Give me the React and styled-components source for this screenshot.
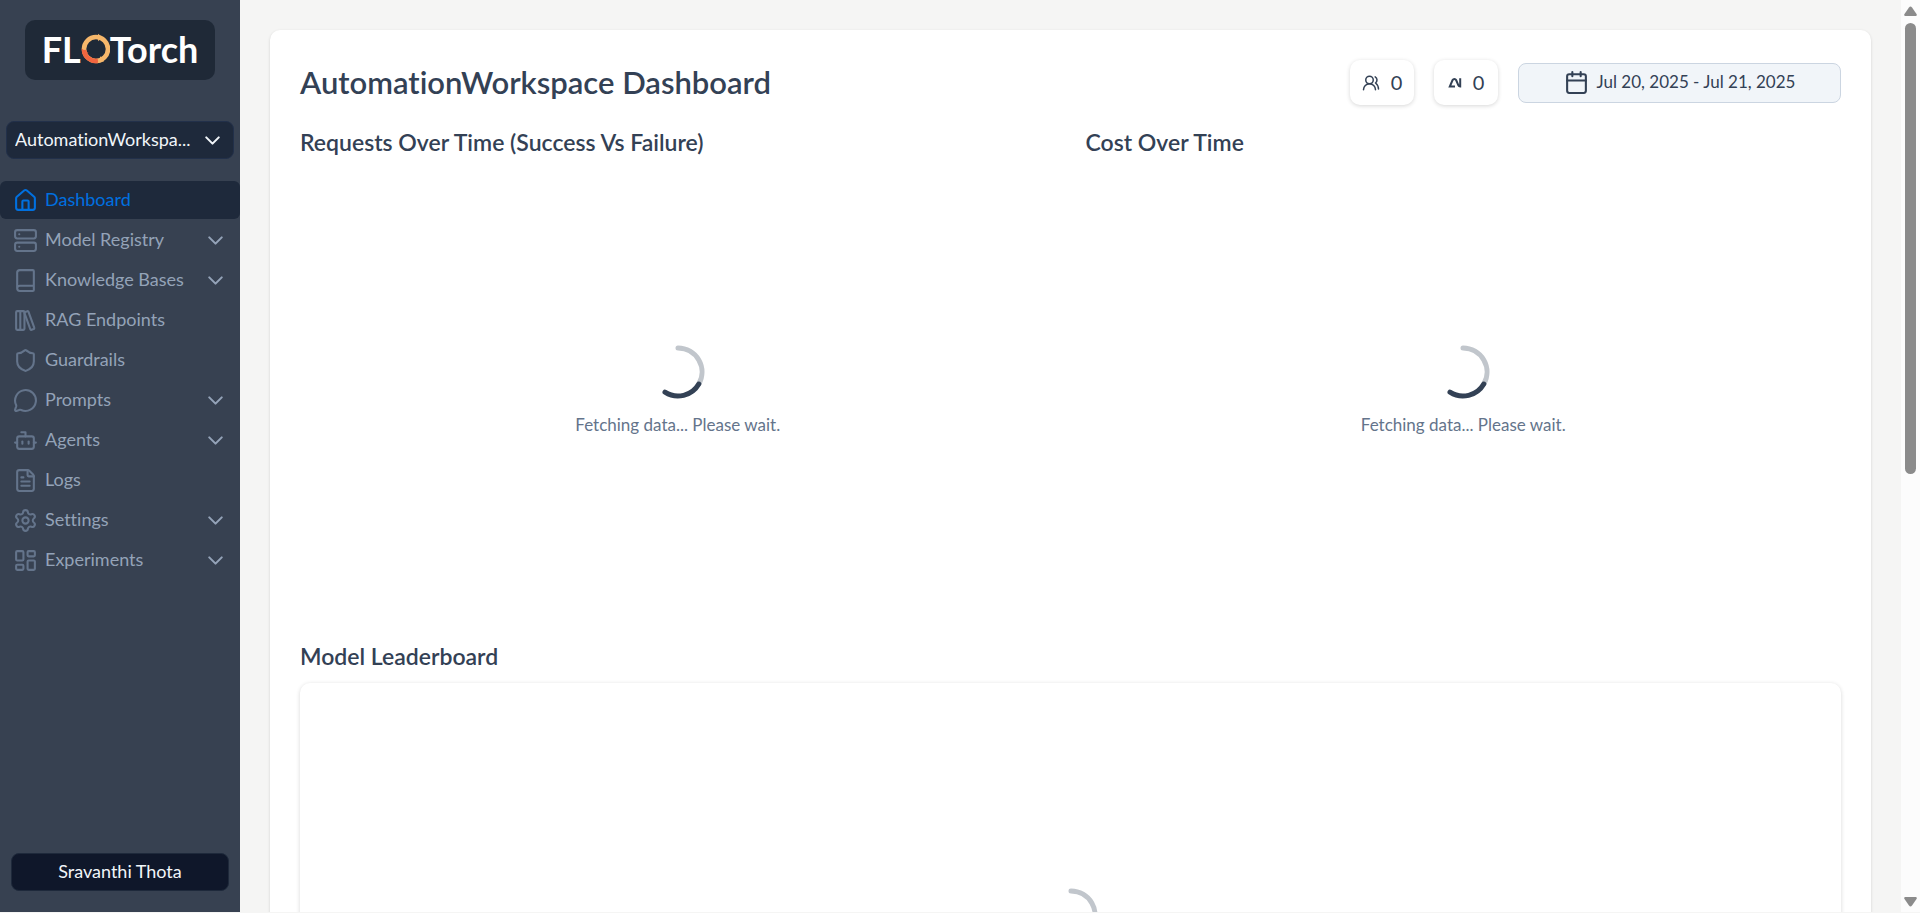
import React from "react";
import styled, { createGlobalStyle } from "styled-components";
import {
  Book,
  Bot,
  Calendar,
  ChevronDown,
  FileText,
  House,
  LayoutDashboard,
  LibraryBig,
  MessageCircle,
  Server,
  Settings,
  Shield,
  UsersRound,
} from "lucide-react";

const GlobalStyle = createGlobalStyle`
  *, *::before, *::after { box-sizing: border-box; }
  body {
    margin: 0;
    background: #f5f5f4;
    color: #334155;
    font-family: Lato, "Liberation Sans", sans-serif;
    font-size: 18px;
    font-variant-ligatures: none;
    line-height: 24px;
  }
  button { font: inherit; font-variant-ligatures: none; cursor: pointer; }
  h1, h2, p, ul { margin: 0; padding: 0; }
`;

const Shell = styled.div`
  display: flex;
  height: calc(100vh - 1px);
  overflow: hidden;
`;

const Sidebar = styled.aside`
  display: flex;
  flex-direction: column;
  flex: none;
  width: 240px;
  padding: 20px 0 21px;
  background: #374151;
`;

const Brand = styled.a`
  display: flex;
  align-items: center;
  justify-content: center;
  align-self: center;
  width: 190px;
  height: 60px;
  padding-bottom: 2px;
  border-radius: 10px;
  background: #1f2937;
  color: #ffffff;
  font-size: 36px;
  font-weight: 700;
  line-height: 40px;
  text-decoration: none;

  svg { flex: none; }
`;

const WorkspaceButton = styled.button`
  display: flex;
  align-items: center;
  justify-content: space-between;
  flex: none;
  height: 38px;
  margin: 41px 6px 22px;
  padding: 0 8px;
  border: 1px solid #22304a;
  border-radius: 8px;
  background: #1e293b;
  color: #f1f5f9;

  span {
    overflow: hidden;
    padding-bottom: 2px;
    text-overflow: ellipsis;
    white-space: nowrap;
  }
`;

const NavList = styled.ul`
  display: flex;
  flex-direction: column;
  gap: 2px;
  flex: 1;
  list-style: none;
`;

const NavLink = styled.a`
  display: flex;
  align-items: center;
  gap: 7px;
  height: 38px;
  padding: 0 12px 0 13px;
  border-radius: 6px;
  background: ${({ $active }) => ($active ? "#1e293b" : "transparent")};
  color: ${({ $active }) => ($active ? "#0070e0" : "#94a3b8")};
  text-decoration: none;

  svg:first-child { color: ${({ $active }) => ($active ? "#0070e0" : "#64748b")}; }
  span { flex: 1; padding-bottom: 2px; }
`;

const UserButton = styled.button`
  flex: none;
  height: 38px;
  margin: 0 11px;
  padding: 0 0 2px;
  border: 1px solid #1e293b;
  border-radius: 8px;
  background: #0f172a;
  color: #f1f5f9;
`;

const Main = styled.main`
  flex: 1;
  min-width: 0;
  padding: 30px;
  overflow-y: auto;
  scrollbar-width: none;
`;

const Card = styled.section`
  padding: 30px;
  border-radius: 10px;
  background: #ffffff;
  box-shadow: 0 1px 3px rgba(0, 0, 0, 0.15);
`;

const Header = styled.header`
  display: flex;
  align-items: center;
  gap: 20px;
`;

const Title = styled.h1`
  flex: 1;
  font-size: 31px;
  font-weight: 600;
  line-height: 45px;
`;

const Stat = styled.button`
  display: flex;
  align-items: center;
  justify-content: center;
  gap: 11px;
  width: 64px;
  height: 45px;
  padding: 0;
  border: 0;
  border-radius: 10px;
  background: #ffffff;
  box-shadow: 0 1px 4px rgba(0, 0, 0, 0.16);
  color: #334155;
  font-size: 20px;

  span { padding-bottom: 2px; }
`;

const DateButton = styled.button`
  display: flex;
  align-items: center;
  justify-content: center;
  gap: 8px;
  width: 323px;
  height: 40px;
  border: 1px solid #cbd5e1;
  border-radius: 8px;
  background: #f1f5f9;
  color: #334155;
  font-size: 17px;

  span { padding-bottom: 2px; }
`;

const Charts = styled.div`
  display: grid;
  grid-template-columns: 1fr 1fr;
  gap: 30px;
  margin: 22px 0 16px;
`;

const Heading = styled.h2`
  font-size: 23px;
  font-weight: 600;
  line-height: 30px;
`;

const Panel = styled.div`
  display: flex;
  flex-direction: column;
  align-items: center;
  justify-content: center;
  gap: 14px;
  height: ${({ $raised }) => ($raised ? "502px" : "468px")};
  margin-top: ${({ $raised }) => ($raised ? "12px" : "0")};
  border-radius: 10px;
  background: #ffffff;
  box-shadow: ${({ $raised }) => ($raised ? "0 1px 4px rgba(0, 0, 0, 0.16)" : "none")};
  color: #64748b;
  font-size: 17px;
`;

const ScrollRail = styled.div`
  display: flex;
  flex-direction: column;
  align-items: center;
  gap: 7px;
  flex: none;
  width: 19px;
  padding: 6px 0 5px;
  background: #fcfcfc;
`;

const ScrollThumb = styled.div`
  width: 11px;
  height: 451px;
  margin-bottom: auto;
  border-radius: 6px;
  background: #8b8b8b;
`;

const navItems = [
  { label: "Dashboard", icon: House, active: true },
  { label: "Model Registry", icon: Server, expandable: true },
  { label: "Knowledge Bases", icon: Book, expandable: true },
  { label: "RAG Endpoints", icon: LibraryBig },
  { label: "Guardrails", icon: Shield },
  { label: "Prompts", icon: MessageCircle, expandable: true },
  { label: "Agents", icon: Bot, expandable: true },
  { label: "Logs", icon: FileText },
  { label: "Settings", icon: Settings, expandable: true },
  { label: "Experiments", icon: LayoutDashboard, expandable: true },
];

function LogoRing() {
  return (
    <svg width="29" height="32" viewBox="1 0 29 32" fill="none" aria-hidden="true">
      <circle cx="16" cy="16" r="12" stroke="#f6b76b" strokeWidth="4.6" />
      <path d="M4 17A12 12 0 0 0 18 27.8" stroke="#f26640" strokeWidth="4.6" />
      <path d="M1.600 15.500L8.500 20l-5.800 1z" fill="#f26640" />
      <path d="M18 .8l4.600 3.400-4.400 4zM17.500 30.200l3-7 3.600 5z" fill="#f6b76b" />
    </svg>
  );
}

function TraceIcon() {
  return (
    <svg width="14" height="12" viewBox="0 0 14 12" fill="none" stroke="currentColor" strokeWidth="2" aria-hidden="true">
      <path d="M7 9.600H1.800L4.600 3Q5.200 1.900 6.400 1.900Q7.600 1.900 8.100 3L10.400 8.400Q10.900 9.600 12.200 9.600V1.200" />
    </svg>
  );
}

function Spinner() {
  return (
    <svg width="54" height="54" viewBox="0 0 54 54" fill="none" strokeWidth="5" strokeLinecap="round" aria-hidden="true">
      <path d="M27 3A24 24 0 0 1 47.800 39" stroke="#c1c6cc" />
      <path d="M47.800 39A24 24 0 0 1 14 47.200" stroke="#334155" />
    </svg>
  );
}

function Loading({ raised }) {
  return (
    <Panel $raised={raised} role="status">
      <Spinner />
      <p>Fetching data... Please wait.</p>
    </Panel>
  );
}

function ScrollArrow({ down }) {
  return (
    <svg width="13" height="10" viewBox="0 0 13 10" fill="#8b8b8b" aria-hidden="true">
      <path d={down ? "M1 0h11q1.400 .6.5 2L8 8.600q-1.500 1.800-3 0L.5 2Q-.400 .6 1 0z" : "M1 10h11q1.400-.6.5-2L8 1.400q-1.500-1.800-3 0L.5 8Q-.400 9.400 1 10z"} />
    </svg>
  );
}

export default function App() {
  return (
    <>
      <GlobalStyle />
      <Shell>
        <Sidebar>
          <Brand href="#">
            <span>FL</span>
            <LogoRing />
            <span>Torch</span>
          </Brand>
          <WorkspaceButton type="button">
            <span>AutomationWorkspa...</span>
            <ChevronDown size={25} strokeWidth={2} />
          </WorkspaceButton>
          <NavList>
            {navItems.map(({ label, icon: Icon, active, expandable }) => (
              <li key={label}>
                <NavLink href="#" $active={active}>
                  <Icon size={25} strokeWidth={2} />
                  <span>{label}</span>
                  {expandable && <ChevronDown size={25} strokeWidth={2} />}
                </NavLink>
              </li>
            ))}
          </NavList>
          <UserButton type="button">Sravanthi Thota</UserButton>
        </Sidebar>
        <Main>
          <Card>
            <Header>
              <Title>AutomationWorkspace Dashboard</Title>
              <Stat type="button">
                <UsersRound size={18} strokeWidth={2} />
                <span>0</span>
              </Stat>
              <Stat type="button">
                <TraceIcon />
                <span>0</span>
              </Stat>
              <DateButton type="button">
                <Calendar size={25} strokeWidth={2} />
                <span>Jul 20, 2025 - Jul 21, 2025</span>
              </DateButton>
            </Header>
            <Charts>
              <section>
                <Heading>Requests Over Time (Success Vs Failure)</Heading>
                <Loading />
              </section>
              <section>
                <Heading>Cost Over Time</Heading>
                <Loading />
              </section>
            </Charts>
            <Heading>Model Leaderboard</Heading>
            <Loading raised />
          </Card>
        </Main>
        <ScrollRail aria-hidden="true">
          <ScrollArrow />
          <ScrollThumb />
          <ScrollArrow down />
        </ScrollRail>
      </Shell>
    </>
  );
}
